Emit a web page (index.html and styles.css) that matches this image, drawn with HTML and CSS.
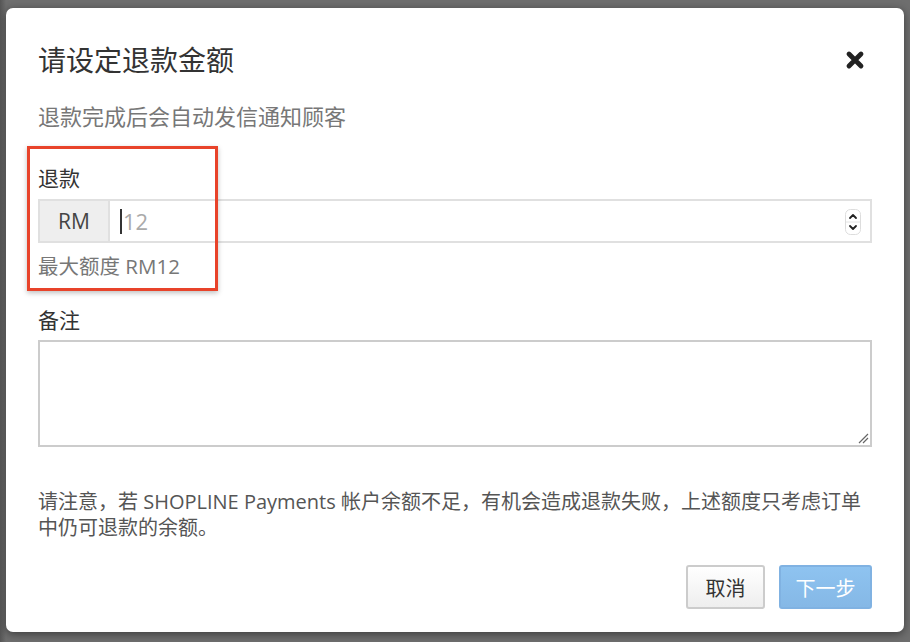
FILE: index.html
```html
<!DOCTYPE html>
<html lang="zh-CN">
<head>
<meta charset="utf-8">
<title>请设定退款金额</title>
<link rel="stylesheet" href="styles.css">
</head>
<body>
<div class="backdrop">
  <div class="modal">
    <div class="modal-header">
      <h2 class="modal-title">请设定退款金额</h2>
      <button class="close" aria-label="关闭">
        <svg width="20" height="20" viewBox="0 0 20 20"><path d="M4 4 L16 16 M16 4 L4 16" stroke="#222" stroke-width="4.8" stroke-linecap="round"/></svg>
      </button>
    </div>
    <p class="subtitle">退款完成后会自动发信通知顾客</p>

    <div class="refund-group">
      <label class="field-label">退款</label>
      <div class="input-group">
        <span class="addon">RM</span>
        <div class="input">
          <span class="caret"></span><span class="value">12</span>
          <span class="spinner">
            <svg width="16" height="26" viewBox="0 0 16 26"><rect x="0.5" y="0.5" width="15" height="25" rx="5" fill="#fff" stroke="#ddd"/><line x1="1" y1="13" x2="15" y2="13" stroke="#e4e4e4"/><path d="M5 9 L8 6 L11 9" fill="none" stroke="#222" stroke-width="1.8" stroke-linecap="round" stroke-linejoin="round"/><path d="M5 17 L8 20 L11 17" fill="none" stroke="#222" stroke-width="1.8" stroke-linecap="round" stroke-linejoin="round"/></svg>
          </span>
        </div>
      </div>
      <p class="hint">最大额度 RM12</p>
      <div class="highlight"></div>
    </div>

    <label class="field-label notes-label">备注</label>
    <div class="textarea">
      <svg class="grip" width="12" height="12" viewBox="0 0 12 12"><path d="M11 2 L2 11 M11 6 L6 11" stroke="#666" stroke-width="1.2"/></svg>
    </div>

    <p class="note">请注意，若 SHOPLINE Payments 帐户余额不足，有机会造成退款失败，上述额度只考虑订单<br>中仍可退款的余额。</p>

    <div class="footer">
      <button class="btn btn-default">取消</button>
      <button class="btn btn-primary">下一步</button>
    </div>
  </div>
</div>
</body>
</html>
```
FILE: styles.css
```css
* { box-sizing: border-box; }
html, body { margin: 0; padding: 0; }
body {
  width: 910px;
  height: 642px;
  overflow: hidden;
  background: #6d6d6d;
  font-family: "Open Sans", "Noto Sans CJK SC", sans-serif;
}
.backdrop {
  width: 910px;
  height: 642px;
  padding: 8px 6px 0 6px;
  background: linear-gradient(to right, #555 0, #6e6e6e 6px, #6e6e6e 100%);
}
.modal {
  width: 898px;
  height: 624px;
  background: #fff;
  border-radius: 7px;
  box-shadow: 0 2px 8px rgba(0,0,0,0.45);
  padding: 34px 32px 23px 32px;
  display: flex;
  flex-direction: column;
  color: #333;
}
.modal-header {
  display: flex;
  justify-content: space-between;
  align-items: center;
  height: 36px;
}
.modal-title {
  margin: 0;
  font-size: 28px;
  font-weight: 400;
  line-height: 36px;
  color: #333;
}
.close {
  border: 0;
  background: none;
  padding: 0;
  margin-right: 7px;
  width: 20px;
  height: 20px;
  display: flex;
}
.subtitle {
  margin: 23px 0 0 0;
  font-size: 22px;
  line-height: 30px;
  color: #777;
}
.refund-group {
  position: relative;
  margin-top: 32px;
  display: flex;
  flex-direction: column;
}
.field-label {
  font-size: 21px;
  line-height: 30px;
  color: #333;
}
.input-group {
  margin-top: 6px;
  display: flex;
  height: 44px;
  border: 2px solid #e0e0e0;
}
.addon {
  width: 70px;
  background: #eee;
  border-right: 2px solid #e0e0e0;
  display: flex;
  align-items: center;
  justify-content: center;
  font-size: 21px;
  color: #444;
}
.input {
  flex: 1;
  display: flex;
  align-items: center;
  padding-left: 10px;
  padding-right: 9px;
}
.caret {
  width: 2px;
  height: 25px;
  background: #333;
  margin-right: 1px;
}
.value {
  font-size: 22px;
  color: #aaa;
  flex: 1;
}
.spinner { display: flex; margin-top: 2px; }
.hint {
  margin: 10px 0 0 0;
  font-size: 20.5px;
  line-height: 26px;
  color: #777;
}
.highlight {
  position: absolute;
  left: -11px;
  top: -17px;
  width: 191px;
  height: 145px;
  border: 3px solid #e8432a;
  box-shadow: 0 2px 5px rgba(0,0,0,0.25);
  pointer-events: none;
}
.notes-label { margin-top: 26px; }
.textarea {
  position: relative;
  margin-top: 5px;
  height: 107px;
  border: 2px solid #ccc;
}
.grip {
  position: absolute;
  right: 1px;
  bottom: 1px;
}
.note {
  margin: 42px 0 0 0;
  font-size: 20px;
  line-height: 26px;
  color: #555;
  white-space: nowrap;
}
.footer {
  margin-top: 24px;
  display: flex;
  justify-content: flex-end;
  gap: 14px;
}
.btn {
  height: 44px;
  border-radius: 3px;
  font-family: "Open Sans", "Noto Sans CJK SC", sans-serif;
  font-size: 20px;
  padding: 0;
}
.btn-default {
  width: 79px;
  color: #333;
  border: 2px solid #ccc;
  background: linear-gradient(#fff, #eee);
}
.btn-primary {
  width: 93px;
  color: #fff;
  border: 2px solid #80b2e2;
  background: linear-gradient(#8ec3f0, #85b8e6);
}
```
